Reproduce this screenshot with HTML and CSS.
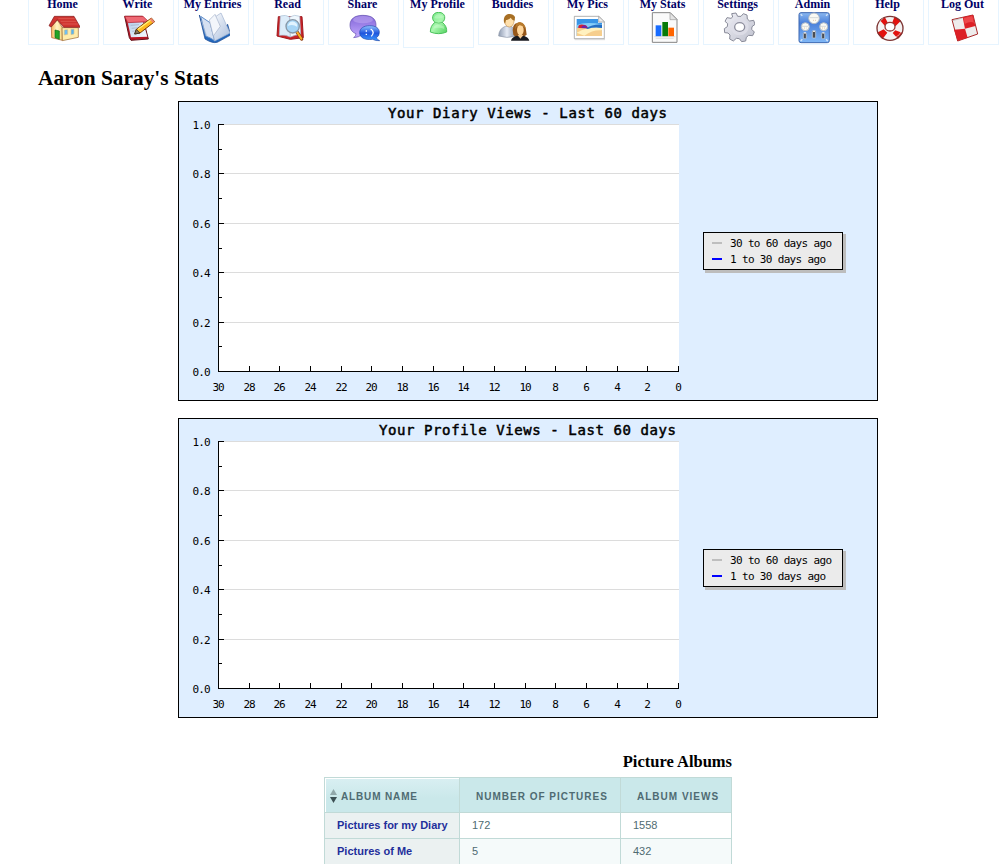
FILE: index.html
```html
<!DOCTYPE html>
<html lang="en">
<head>
<meta charset="utf-8">
<title>Aaron Saray's Stats</title>
<link rel="stylesheet" href="styles.css">
</head>
<body>
<nav class="nav">
  <a class="nav-item"><span class="nav-label">Home</span>
    <svg class="icon" viewBox="142 36 96 96">
      <defs><linearGradient id="wall" x2="1"><stop offset="0" stop-color="#f7b45d"/><stop offset=".5" stop-color="#fff3c4"/><stop offset="1" stop-color="#f5d985"/></linearGradient></defs>
      <path d="M152 81L170 60L185 83V121L153 113Z" fill="url(#wall)" stroke="#a85a25" stroke-width="2"/>
      <path d="M184 83H233V112L185 122Z" fill="#ffecaa" stroke="#94602a" stroke-width="2"/>
      <path d="M161 49H220L239 82H189L170 59L151 81L145 77Z" fill="#cf3430" stroke="#7d1717" stroke-width="2"/>
      <path d="M173 56H222M180 64H227M185 72H232" stroke="#e2665c" stroke-width="2" fill="none"/>
      <path d="M163 90L176 93V118L163 113Z" fill="#22a526" stroke="#0c6b16" stroke-width="2"/>
      <path d="M191 90l10-1v14l-10 2zM211 88l9-1v15l-9 2z" fill="#58b4f0" stroke="#d9c48d" stroke-width="2"/>
      <path d="M196 92v10" stroke="#e6f5ff" stroke-width="1"/>
    </svg></a>
  <a class="nav-item"><span class="nav-label">Write</span>
    <svg class="icon" viewBox="367 36 96 96">
      <defs><linearGradient id="paper" x2="1" y2="1"><stop offset="0" stop-color="#a9c7e8"/><stop offset="1" stop-color="#f7fbff"/></linearGradient></defs>
      <path d="M372 49H425L443 117L391 121L386 113Z" fill="#b91424" stroke="#65121b" stroke-width="3"/>
      <path d="M378 53H424L440 110L391 112Z" fill="url(#paper)"/>
      <path d="M372 49H427L444 65L381 68Z" fill="#ee6974" stroke="#ad1c2a" stroke-width="2"/>
      <path d="M390 76l25-2M393 85l22-2M395 94l15-2" stroke="#9cacbf" stroke-width="2"/>
      <path d="M407 88L452 54L462 65L418 99L402 102Z" fill="#ffb91f" stroke="#7a3c08" stroke-width="3"/>
      <path d="M412 88L453 58" stroke="#fff27a" stroke-width="4"/>
      <path d="M407 88L418 99L402 102Z" fill="#8a7558" stroke="#222" stroke-width="2"/>
      <path d="M446 58L452 54L462 65L457 69Z" fill="#ef8770"/>
    </svg></a>
  <a class="nav-item"><span class="nav-label">My Entries</span>
    <svg class="icon" viewBox="592 36 96 96">
      <defs><linearGradient id="page" x2="1" y2="1"><stop offset="0" stop-color="#fff"/><stop offset="1" stop-color="#a9bddc"/></linearGradient></defs>
      <path d="M596 45L613 117Q635 131 650 127L690 105L681 73L638 116L617 107Z" fill="#2368bd" stroke="#18468e" stroke-width="2"/>
      <path d="M600 49L628 68L642 122Q629 113 615 108Z" fill="#d5e0f1" stroke="#608fcb" stroke-width="3"/>
      <path d="M628 61L661 39L688 99L642 123Z" fill="url(#page)" stroke="#9fb1cf" stroke-width="2"/>
      <path d="M626 60L643 43L659 79L638 108Z" fill="#f3f6fb" stroke="#a3b1c9" stroke-width="2"/>
      <path d="M602 62L618 108" stroke="#a6b8d2" stroke-width="2"/>
    </svg></a>
  <a class="nav-item"><span class="nav-label">Read</span>
    <svg class="icon" viewBox="67 36 96 96">
      <path d="M83 50H154L158 113L119 118L79 108Z" fill="#c82226" stroke="#a0181c" stroke-width="3"/>
      <path d="M89 48Q105 43 117 51L119 111Q104 103 86 106Z" fill="#dcecf9" stroke="#a9bfd4" stroke-width="2"/>
      <path d="M117 51Q132 42 147 49L150 105Q136 103 119 111Z" fill="#eff7fd" stroke="#a9bfd4" stroke-width="2"/>
      <path d="M139 96L153 117" stroke="#8d3d13" stroke-width="10" stroke-linecap="round"/>
      <path d="M139 96L152 116" stroke="#ffaf24" stroke-width="6" stroke-linecap="round"/>
      <circle cx="126" cy="79" r="20" fill="#a6d5f5" stroke="#8797a6" stroke-width="4"/>
      <path d="M111 78Q116 62 130 65Q142 70 139 80Q126 71 111 78Z" fill="#e1f4ff"/>
    </svg></a>
  <a class="nav-item"><span class="nav-label">Share</span>
    <svg class="icon" viewBox="292 36 96 96">
      <defs>
        <linearGradient id="violet" x2="0" y2="1"><stop offset="0" stop-color="#7f62d6"/><stop offset="1" stop-color="#c4abff"/></linearGradient>
        <linearGradient id="bubble" x2="0" y2="1"><stop offset="0" stop-color="#92c4ff"/><stop offset=".5" stop-color="#1f55dd"/><stop offset="1" stop-color="#3c9bff"/></linearGradient>
      </defs>
      <path d="M336 46C365 46 376 58 376 75C376 94 359 104 333 104Q325 112 309 113Q316 108 316 101C303 96 298 87 298 75C298 58 311 46 336 46Z" fill="url(#violet)" stroke="#6250ad" stroke-width="2"/>
      <ellipse cx="337" cy="59" rx="30" ry="11" fill="#b9a2f0" opacity=".65"/>
      <path d="M357 77C376 77 386 85 386 97Q386 109 377 113Q379 119 387 122Q374 123 366 118C341 121 327 112 327 98C327 85 339 77 357 77Z" fill="url(#bubble)" stroke="#214aac" stroke-width="2"/>
      <path d="M347 91v4M347 101v4M360 87Q374 96 362 109" stroke="#fff" stroke-width="4" fill="none"/>
    </svg></a>
  <a class="nav-item nav-item-tall"><span class="nav-label">My Profile</span>
    <svg class="icon" viewBox="519 36 96 96">
      <defs><linearGradient id="green" x2="1" y2="1"><stop offset="0" stop-color="#72e684"/><stop offset=".5" stop-color="#a8f7ad"/><stop offset="1" stop-color="#50d15e"/></linearGradient></defs>
      <path d="M555 67C544 60 544 37 566 37C588 37 588 60 577 67C587 75 591 85 590 96Q566 106 541 96C541 84 545 74 555 67Z" fill="url(#green)" stroke="#4bc15b" stroke-width="3"/>
      <path d="M553 54Q556 42 567 43Q577 43 579 52Q565 58 553 54ZM552 78Q565 70 581 79L583 87Q567 80 549 86Z" fill="#d5ffd6" opacity=".4"/>
      <path d="M555 67Q566 72 577 67" fill="none" stroke="#49b957" stroke-width="2"/>
    </svg></a>
  <a class="nav-item"><span class="nav-label">Buddies</span>
    <svg class="icon" viewBox="67 36 96 96">
      <defs><linearGradient id="shirt" x2="1"><stop offset="0" stop-color="#8f9cb2"/><stop offset=".5" stop-color="#e6ebf5"/><stop offset="1" stop-color="#8d9ab0"/></linearGradient></defs>
      <path d="M69 108Q70 86 89 79H107Q119 86 119 109Q93 116 69 108Z" fill="url(#shirt)" stroke="#8f99a9" stroke-width="2"/>
      <ellipse cx="101" cy="63" rx="14" ry="18" fill="#ffe0ac" stroke="#c9995c" stroke-width="2"/>
      <path d="M85 66C80 38 111 36 118 51L117 62Q109 60 105 53Q97 62 91 60L88 71Z" fill="#a76f24"/>
      <path d="M113 104Q106 70 127 68Q151 65 153 104L143 111H120Z" fill="#96571a"/>
      <ellipse cx="134" cy="90" rx="10" ry="16" fill="#ffd69b"/>
      <path d="M118 89Q124 74 132 76Q146 78 151 91Q148 67 133 66Q119 67 118 89Z" fill="#b87a2c"/>
      <path d="M106 122Q108 111 124 107L134 112L144 107Q159 112 161 122Z" fill="#191a20"/>
      <path d="M126 105L134 116L143 105Z" fill="#f6c990"/>
    </svg></a>
  <a class="nav-item"><span class="nav-label">My Pics</span>
    <svg class="icon" viewBox="292 36 96 96">
      <path d="M296 49H370L386 66V116H296Z" fill="#fff" stroke="#8c8c8c" stroke-width="2"/>
      <path d="M303 57H367V68H379V108H303Z" fill="#3995e6"/>
      <path d="M303 76Q328 64 379 73V83H303Z" fill="#85cdf8"/>
      <path d="M303 84Q333 77 379 91V108H303Z" fill="#f6ce8d"/>
      <path d="M303 98Q340 78 379 83V91Q353 88 326 107Z" fill="#fff1bf"/>
      <path d="M308 84Q306 72 323 74Q335 75 337 85Z" fill="#d22036"/>
      <path d="M317 84Q320 72 331 77L337 85Z" fill="#7020a3"/>
      <path d="M331 86Q350 72 379 74V84Q353 80 337 87Z" fill="#246ec3"/>
      <path d="M369 49V66H387Z" fill="#eee" stroke="#999" stroke-width="2"/>
      <path d="M297 119H388V67" fill="none" stroke="#c9c9c9" stroke-width="2"/>
    </svg></a>
  <a class="nav-item"><span class="nav-label">My Stats</span>
    <svg class="icon" viewBox="517 36 96 96">
      <path d="M530 38H584L604 58V127H530Z" fill="#fafafa" stroke="#858585" stroke-width="3"/>
      <path d="M583 38V59H604Z" fill="#e4e4e4" stroke="#999" stroke-width="2"/>
      <path d="M540 76H557V109H540Z" fill="#176bff"/>
      <path d="M560 66H577V109H560Z" fill="#087b09"/>
      <path d="M578 83H595V109H578Z" fill="#ff6500"/>
      <path d="M536 110H599M540 115H594" stroke="#d2d2d2" stroke-width="2"/>
    </svg></a>
  <a class="nav-item"><span class="nav-label">Settings</span>
    <svg class="icon" viewBox="7 36 96 96">
      <defs><linearGradient id="metal" x2="1" y2="1"><stop offset="0" stop-color="#f0f0f6"/><stop offset="1" stop-color="#bfc1ce"/></linearGradient></defs>
      <path d="M33 41L46 39L51 49L61 49L68 41L79 45L80 57L87 63L99 61L103 73L94 80L93 88L101 96L96 107L84 106L77 112L75 123L63 125L56 116L47 115L38 123L27 117L28 105L22 99L12 98L11 86L20 80L21 71L13 64L19 53L31 55L36 51Z" fill="url(#metal)" stroke="#898b99" stroke-width="3" stroke-linejoin="round"/>
      <ellipse cx="57" cy="81" rx="27" ry="25" fill="#dedfe9" opacity=".8"/>
      <ellipse cx="57" cy="81" rx="15" ry="13" fill="#fff" stroke="#8d8e9d" stroke-width="4"/>
    </svg></a>
  <a class="nav-item"><span class="nav-label">Admin</span>
    <svg class="icon" viewBox="232 36 96 96">
      <defs><linearGradient id="panel" x2="0" y2="1"><stop offset="0" stop-color="#8bb8f0"/><stop offset=".35" stop-color="#4a80da"/><stop offset="1" stop-color="#80b8f7"/></linearGradient></defs>
      <rect x="235" y="38" width="91" height="90" rx="6" fill="url(#panel)" stroke="#3c66b0" stroke-width="3"/>
      <g fill="#fafaf4" stroke="#aeb8c6" stroke-width="3"><circle cx="280" cy="55" r="16"/><circle cx="254" cy="80" r="12"/><circle cx="309" cy="80" r="12"/></g>
      <g stroke="#53647b" stroke-width="2" stroke-dasharray="2 4"><path d="M270 53H291M246 79H262M300 79H317"/><path d="M277 61H285M251 84H258M305 84H313" stroke="#cc8c4e"/></g>
      <g fill="#4a4d53" stroke="#d0dbe9" stroke-width="2"><rect x="248" y="98" width="9" height="18" rx="2"/><rect x="275" y="92" width="10" height="22" rx="2"/><rect x="303" y="98" width="9" height="18" rx="2"/></g>
      <path d="M250 99h6M277 94h6M305 99h6" stroke="#fff" stroke-width="3"/>
      <path d="M240 43l5 4M321 43l-5 4M240 123l5-5M321 123l-5-5" stroke="#d8e6f7" stroke-width="4"/>
    </svg></a>
  <a class="nav-item"><span class="nav-label">Help</span>
    <svg class="icon" viewBox="457 36 96 96">
      <ellipse cx="508" cy="84" rx="27" ry="24" fill="none" stroke="#f4f2f2" stroke-width="24"/>
      <path d="M477 60L492 50L503 71L493 78ZM522 49L541 62L524 79L514 70ZM469 98L489 88L500 98L485 118ZM524 91L546 99L532 117L516 99Z" fill="#e2120f"/>
      <ellipse cx="508" cy="85" rx="39" ry="36" fill="none" stroke="#7d3533" stroke-width="4"/>
      <ellipse cx="508" cy="80" rx="15" ry="13" fill="#fff" stroke="#963a36" stroke-width="4"/>
      <path d="M474 81Q475 61 488 55M521 113Q537 108 542 94" fill="none" stroke="#fff" stroke-width="3" opacity=".5"/>
    </svg></a>
  <a class="nav-item"><span class="nav-label">Log Out</span>
    <svg class="icon" viewBox="682 36 96 96">
      <path d="M694 59L757 45L771 102L711 123Z" fill="#eeecec" stroke="#a72626" stroke-width="3"/>
      <path d="M726 52L757 45L764 78L733 86ZM700 89L733 86L741 113L711 122Z" fill="#dc2026"/>
      <path d="M729 54L755 48L760 68Q748 63 732 72Z" fill="#f3585a" opacity=".7"/>
      <path d="M696 62L725 54" stroke="#b8b4b4" stroke-width="2"/>
    </svg></a>
</nav>
<main>
  <h1 class="page-title">Aaron Saray's Stats</h1>
  <div class="charts" id="charts"></div>
  <section class="albums">
    <h2 class="albums-title">Picture Albums</h2>
    <table class="album-table">
      <thead><tr>
        <th class="col-name sorted"><span class="sort"><svg class="sort-icon" viewBox="0 0 7 14"><path d="M0 6L3.5 0L7 6Z" fill="#91a8aa"/><path d="M0 8H7L3.5 14Z" fill="#3c5054"/></svg>ALBUM NAME</span></th>
        <th class="col-count">NUMBER OF PICTURES</th>
        <th class="col-views">ALBUM VIEWS</th>
      </tr></thead>
      <tbody>
        <tr><td class="name">Pictures for my Diary</td><td>172</td><td>1558</td></tr>
        <tr class="alt"><td class="name">Pictures of Me</td><td>5</td><td>432</td></tr>
      </tbody>
    </table>
  </section>
</main>
<script src="charts.js"></script>
</body>
</html>
```
FILE: styles.css
```css
body {
  margin: 0;
  height: 864px;
  overflow: hidden;
  background: #fff;
  color: #000;
  font-family: "Liberation Serif", serif;
}
.nav {
  display: flex;
  align-items: flex-start;
  gap: 4px;
  height: 48px;
  padding-left: 28px;
}
.nav-item {
  box-sizing: border-box;
  flex: none;
  width: 71px;
  height: 45px;
  border: 1px solid #e6f4ff;
  border-top: 0;
  display: flex;
  flex-direction: column;
  align-items: center;
}
.nav-item-tall { height: 48px; }
.nav-label {
  height: 12px;
  margin-top: -3px;
  margin-bottom: 3px;
  padding-right: 2px;
  line-height: 14px;
  font-size: 12px;
  font-weight: bold;
  color: #000066;
  white-space: nowrap;
}
.icon { width: 32px; height: 32px; flex: none; }
.page-title {
  margin: 18px 0 11px 38px;
  font-size: 21.33px;
  line-height: 24px;
  font-weight: bold;
}
.charts {
  display: flex;
  flex-direction: column;
  gap: 17px;
  padding-left: 178px;
}
.chart { display: block; width: 700px; height: 300px; }
.bg { fill: #dfeeff; stroke: #000; }
.plot { fill: #fff; }
.grid { stroke: #dcdcdc; }
.axis { stroke: #000; fill: none; }
.chart text { font-family: "DejaVu Sans Mono", monospace; font-size: 11px; }
.chart .chart-title { font-size: 14px; stroke: #000; stroke-width: .5px; }
.middle { text-anchor: middle; }
.legend-shadow { fill: #bdbdbd; }
.legend-box { fill: #ebebeb; stroke: #000; }
.key-old { fill: #bebebe; }
.key-new { fill: #0000ff; }
.albums {
  width: 408px;
  margin: 34px 0 0 324px;
}
.albums-title {
  margin: 0 0 5px;
  text-align: right;
  font-size: 16.5px;
  line-height: 20px;
}
.album-table {
  width: 408px;
  table-layout: fixed;
  border-collapse: separate;
  border-spacing: 0;
  border-left: 1px solid #c1dad7;
  font-family: "Liberation Sans", sans-serif;
  font-size: 11px;
  color: #4f6b72;
}
.album-table th {
  box-sizing: border-box;
  height: 36px;
  padding: 2px 0 0 16px;
  border: solid #c1dad7;
  border-width: 1px 1px 1px 0;
  background: #cae8ea;
  text-align: left;
  font-size: 10px;
  letter-spacing: 1px;
  white-space: nowrap;
}
.album-table .sorted {
  padding-left: 5px;
  background: linear-gradient(#d9eff2, #cae8ea 60%);
  box-shadow: inset 1px 1px #fff;
  letter-spacing: .85px;
}
.sort { display: flex; align-items: center; gap: 4px; }
.sort-icon { width: 7px; height: 14px; }
.col-name { width: 135px; }
.col-count { width: 161px; }
.col-views { width: 111px; }
.album-table td {
  box-sizing: border-box;
  height: 26px;
  padding: 0 0 1px 12px;
  border: solid #c1dad7;
  border-width: 0 1px 1px 0;
  background: #fff;
  white-space: nowrap;
}
.album-table .alt td { background: #f5fafa; }
.album-table td.name, .album-table .alt td.name {
  background: #ebf1f1;
  color: #1f2f9b;
  font-weight: bold;
}
```
FILE: charts.js
```js
const yMajor = [23, 72, 122, 171, 221, 270];
const yMinor = [48, 97, 147, 196, 245];
const xMajor = [40, 71, 101, 132, 163, 193, 224, 255, 285, 316, 347, 377, 408, 439, 469, 500];

function label(text, x, y, step, cls) {
  return `<text x="${x}" y="${y}" textLength="${text.length * step}" class="${cls || ''}">${text}</text>`;
}

function chart(title, titleX) {
  let s = '<svg class="chart" viewBox="0 0 700 300">';
  s += '<rect class="bg" x=".5" y=".5" width="699" height="299"/>';
  s += '<rect class="plot" x="40" y="23" width="461" height="248"/>';
  s += label(title, titleX, 17, 9, 'chart-title');
  yMajor.forEach((y, i) => {
    if (i < 5) s += `<path class="grid" d="M41 ${y + .5}H501"/>`;
    s += `<path class="axis" d="M40 ${y + .5}H46"/>`;
    s += label((1 - i / 5).toFixed(1), 14.5, y + 5, 6);
  });
  yMinor.forEach(y => { s += `<path class="axis" d="M40 ${y + .5}H44"/>`; });
  s += '<path class="axis" d="M40.5 23V270.5H501"/>';
  xMajor.forEach((x, i) => {
    const t = String(30 - i * 2);
    s += `<path class="axis" d="M${x + .5} 265V271"/>`;
    s += label(t, x + .5, 290, 6, 'middle');
  });
  s += '<rect class="legend-shadow" x="527" y="133" width="141" height="39"/>';
  s += '<rect class="legend-box" x="525.5" y="131.5" width="139" height="37"/>';
  s += '<rect class="key-old" x="534" y="141" width="10" height="2"/>';
  s += '<rect class="key-new" x="534" y="157" width="10" height="2"/>';
  s += label('30 to 60 days ago', 552, 146, 6);
  s += label('1 to 30 days ago', 552, 162, 6);
  return s + '</svg>';
}

document.getElementById('charts').innerHTML =
  chart('Your Diary Views - Last 60 days', 210) +
  chart('Your Profile Views - Last 60 days', 201);
```
